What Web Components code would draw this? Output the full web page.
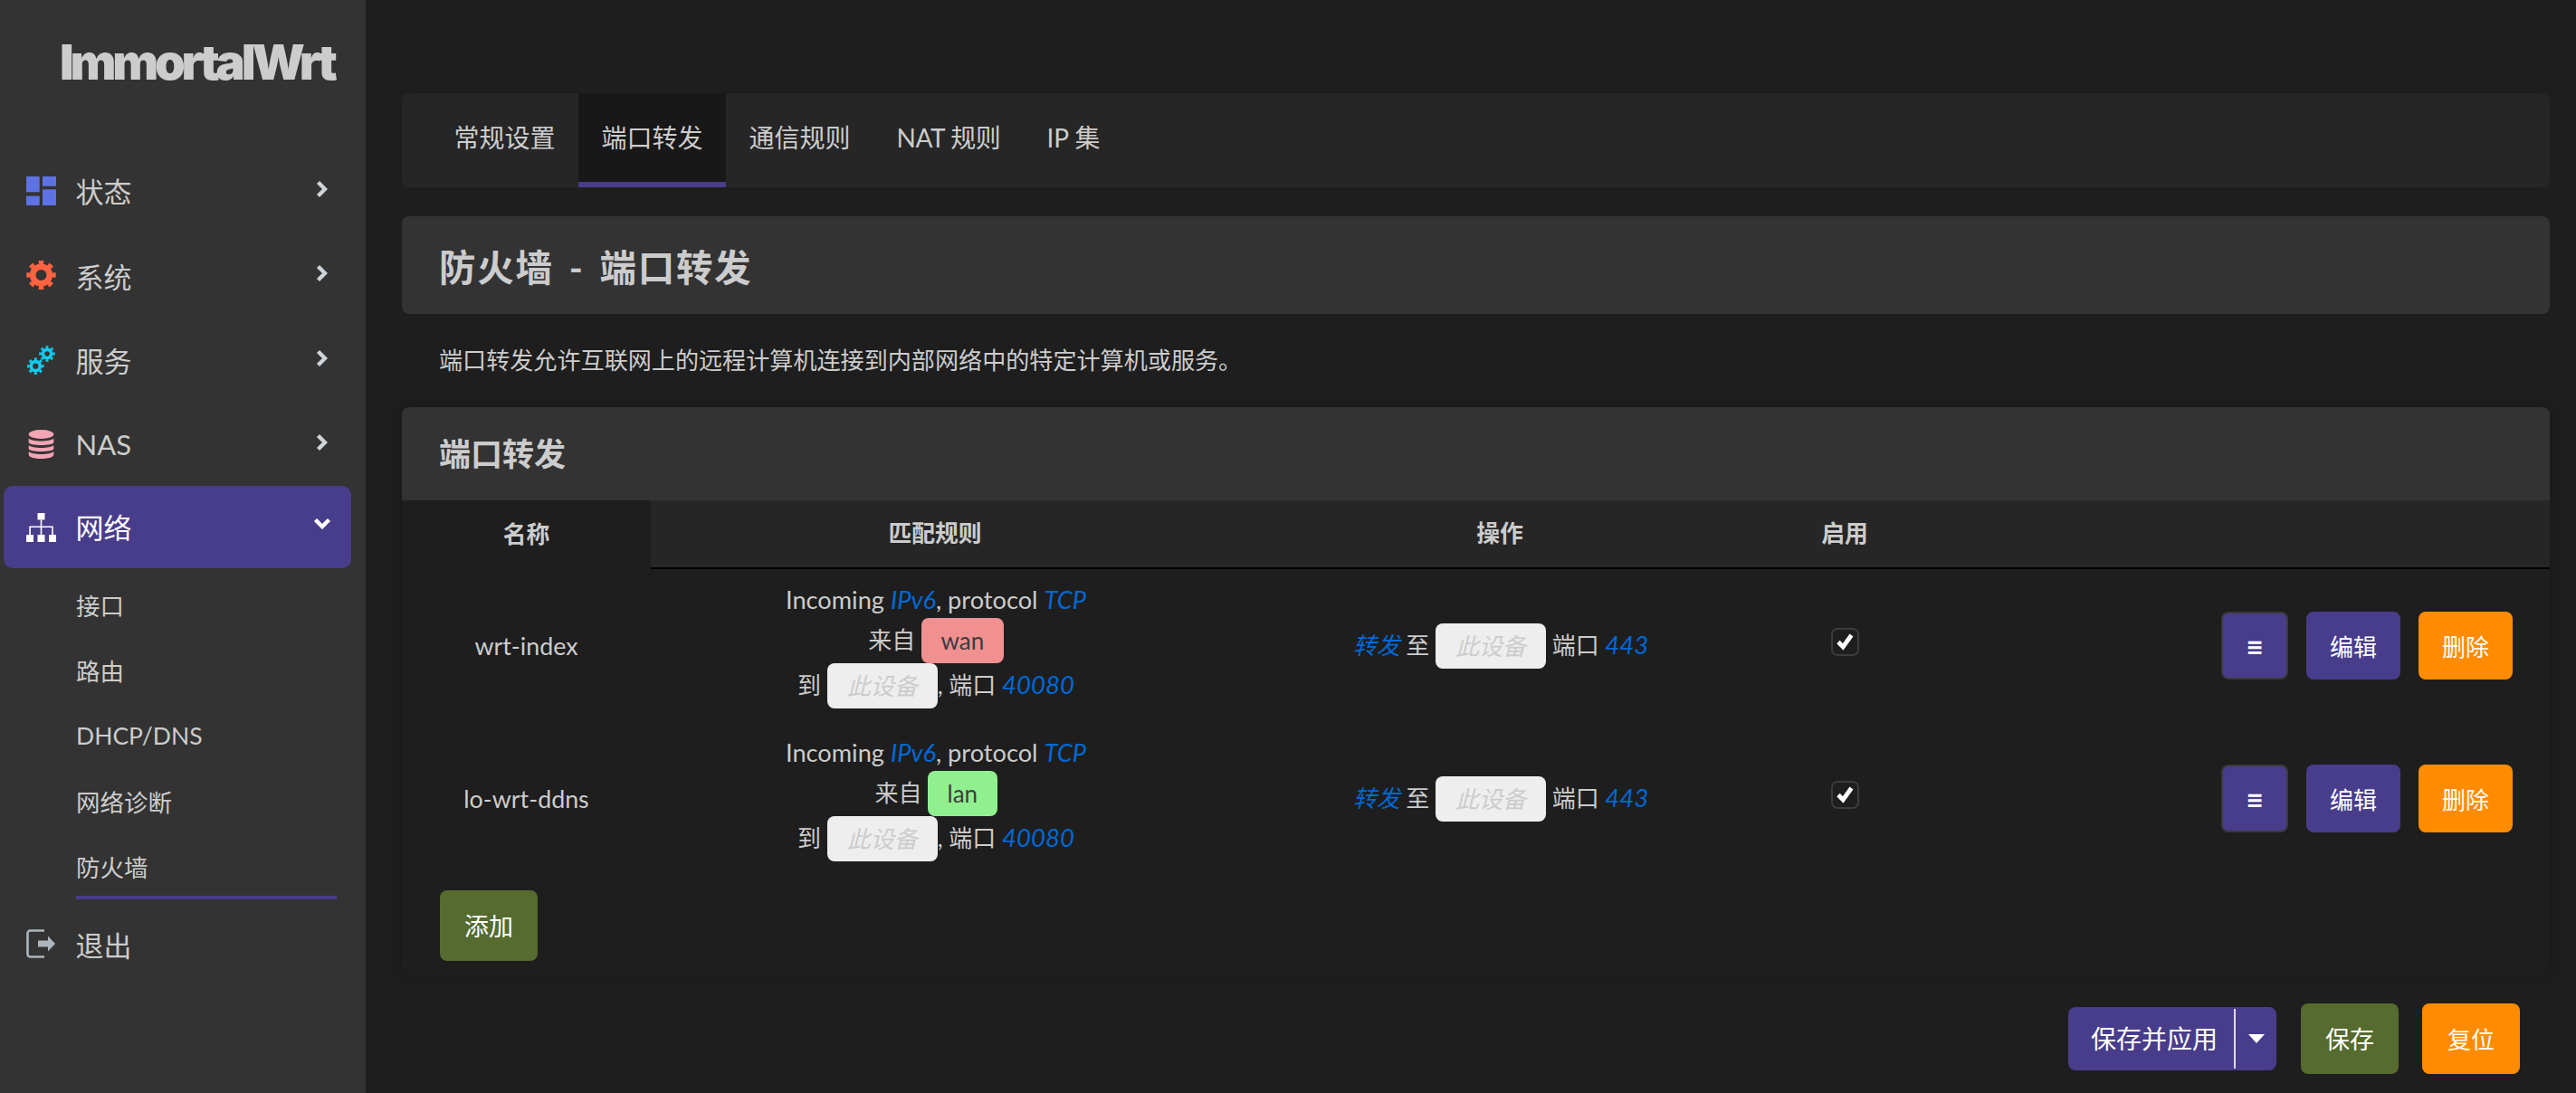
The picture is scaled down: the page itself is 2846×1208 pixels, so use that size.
<!DOCTYPE html>
<html lang="zh-CN">
<head>
<meta charset="utf-8">
<title>防火墙 - 端口转发</title>
<style>
    html, body {
        margin: 0;
        height: 100%;
        background: #1e1e1e;
        overflow: hidden;
    }
    body {
        color: #ccc;
        font-family: Lato, 'Noto Sans CJK SC', sans-serif;
        font-size: 26px;
    }
</style>
</head>
<body>

<op-app>
    <op-sidebar slot="side">
        <op-nav-item>
            <svg slot="icon" width="33" height="32" viewBox="0 0 33 32" fill="#5e72e4"><rect width="14.7" height="17.3"/><rect y="21.6" width="14.7" height="10.4"/><rect x="18" width="15" height="10.7"/><rect x="18" y="14.3" width="15" height="17.7"/></svg>
            状态
        </op-nav-item>
        <op-nav-item>
            <svg slot="icon" width="33" height="32" viewBox="0 0 33 32" fill="none" stroke="#fb6340"><circle cx="16.5" cy="16" r="9.3" stroke-width="6.6"/><circle cx="16.5" cy="16" r="14" stroke-width="4.4" pathLength="80" stroke-dasharray="5 5" stroke-dashoffset="2.5"/></svg>
            系统
        </op-nav-item>
        <op-nav-item>
            <svg slot="icon" width="33" height="32" viewBox="0 0 33 32" fill="none" stroke="#11cdef"><circle cx="10.3" cy="22.7" r="5" stroke-width="3.8"/><circle cx="10.3" cy="22.7" r="8" stroke-width="2.6" pathLength="80" stroke-dasharray="5 5" stroke-dashoffset="2.5"/><circle cx="23" cy="9" r="4.6" stroke-width="3.6"/><circle cx="23" cy="9" r="7.5" stroke-width="2.6" pathLength="80" stroke-dasharray="5 5" stroke-dashoffset="2.5"/></svg>
            服务
        </op-nav-item>
        <op-nav-item style="margin-bottom: .5px">
            <svg slot="icon" width="33" height="32" viewBox="0 0 33 32" fill="#f3a4b5"><ellipse cx="16.5" cy="5" rx="13.8" ry="5"/><path d="M2.7 9.5C6 13.4 27 13.4 30.3 9.5V14C30.3 18 2.7 18 2.7 14Z"/><path d="M2.7 17C6 20.9 27 20.9 30.3 17V21C30.3 25 2.7 25 2.7 21Z"/><path d="M2.7 24C6 27.9 27 27.9 30.3 24V27.5C30.3 33.5 2.7 33.5 2.7 27.5Z"/></svg>
            NAS
        </op-nav-item>
        <op-nav-item open>
            <svg slot="icon" width="33" height="32" viewBox="0 0 33 32" fill="#fff"><rect x="12.5" width="8" height="7.5"/><rect y="24" width="8" height="8"/><rect x="12.5" y="24" width="8" height="8"/><rect x="25" y="24" width="8" height="8"/><path d="M15.7 7.5h1.6v7h12.5v9.5h-1.6v-8H17.3v8h-1.6v-8H4.9v8H3.3v-9.5h12.4z"/></svg>
            网络
        </op-nav-item>
        <op-sub-item>接口</op-sub-item>
        <op-sub-item>路由</op-sub-item>
        <op-sub-item>DHCP/DNS</op-sub-item>
        <op-sub-item>网络诊断</op-sub-item>
        <op-sub-item active>防火墙</op-sub-item>
        <op-nav-item leaf>
            <svg slot="icon" width="33" height="32" viewBox="0 0 33 32"><path d="M20 1.5H4.5a3 3 0 0 0-3 3v23a3 3 0 0 0 3 3H20" fill="none" stroke="#adb5bd" stroke-width="2.6"/><path d="M13 12.5h11V7.5l8 8.5-8 8.500v-5H13z" fill="#adb5bd"/></svg>
            退出
        </op-nav-item>
    </op-sidebar>

    <op-tabs>
        <op-tab>常规设置</op-tab>
        <op-tab active>端口转发</op-tab>
        <op-tab>通信规则</op-tab>
        <op-tab style="letter-spacing: -.4px">NAT 规则</op-tab>
        <op-tab>IP 集</op-tab>
    </op-tabs>

    <op-title>防火墙 - 端口转发</op-title>
    <op-desc>端口转发允许互联网上的远程计算机连接到内部网络中的特定计算机或服务。</op-desc>

    <op-section heading="端口转发">
        <op-table-head></op-table-head>
        <op-rule-row name="wrt-index" zone="wan"></op-rule-row>
        <op-rule-row name="lo-wrt-ddns" zone="lan"></op-rule-row>
        <op-btn slot="add" kind="green" w="108" h="78">添加</op-btn>
    </op-section>

    <op-footer>
        <op-apply>保存并应用</op-apply>
        <op-btn kind="green" w="108" h="78">保存</op-btn>
        <op-btn kind="orange" w="108" h="78">复位</op-btn>
    </op-footer>
</op-app>

<script>
// every element keeps its own markup and styles in an open shadow root
function shadow(el, html) {
    el.attachShadow({mode: 'open'}).innerHTML = html;
}

class OpApp extends HTMLElement {
    constructor() {
        super();
        shadow(this, `
            <style>
                :host { display: flex; height: 1208px; }
                main { flex: 1; min-width: 0; padding: 103px 29px 0 40px; }
            </style>
            <slot name="side"></slot>
            <main><slot></slot></main>
        `);
    }
}

class OpSidebar extends HTMLElement {
    constructor() {
        super();
        shadow(this, `
            <style>
                :host {
                    display: block;
                    flex: none;
                    width: 404px;
                    height: 100%;
                    background: #333;
                    box-sizing: border-box;
                    padding: 0 16px 0 4px;
                }
                .logo {
                    height: 165px;
                    padding: 33px 0 0 62px;
                    box-sizing: border-box;
                    font: 900 54px/72px Inter, sans-serif;
                    letter-spacing: -4.200px;
                    color: #ccc;
                }
            </style>
            <div class="logo">ImmortalWrt</div>
            <slot></slot>
        `);
    }
}

class OpNavItem extends HTMLElement {
    constructor() {
        super();
        const open = this.hasAttribute('open');
        const leaf = this.hasAttribute('leaf');
        let arrow = '<svg class="arrow" width="13" height="20" viewBox="0 0 13 20"><path d="M2.500 2.500 10 10l-7.500 7.500" fill="none" stroke="#ced4da" stroke-width="4.400"/></svg>';
        if (open) {
            arrow = '<svg class="arrow down" width="20" height="13" viewBox="0 0 20 13"><path d="M2.500 2.500 10 10l7.500-7.500" fill="none" stroke="#fff" stroke-width="4.400"/></svg>';
        }
        shadow(this, `
            <style>
                :host {
                    display: flex;
                    align-items: center;
                    height: 91px;
                    margin-bottom: 2.500px;
                    padding-left: 25px;
                    border-radius: 10px;
                    font-size: 31px;
                    color: #ccc;
                }
                :host([open]) { background: #483d8b; color: #fff; margin-bottom: 0; }
                :host([open]) span { top: -1px; }
                :host([leaf]) { margin-top: 4px; }
                ::slotted(svg) { flex: none; margin-right: 21.500px; }
                span { position: relative; }
                .arrow { margin-left: auto; margin-right: 26px; position: relative; top: -2px; }
                .arrow.down { margin-right: 22px; top: -4px; }
            </style>
            <slot name="icon"></slot>
            <span><slot></slot></span>
            ${leaf ? '' : arrow}
        `);
    }
}

class OpSubItem extends HTMLElement {
    constructor() {
        super();
        shadow(this, `
            <style>
                :host {
                    display: flex;
                    align-items: center;
                    height: 72.400px;
                    margin-left: 80px;
                    margin-right: 16px;
                    box-sizing: border-box;
                    font-size: 26.500px;
                    color: #ccc;
                }
                :host(:first-of-type) { margin-top: 4px; }
                :host([active]) { border-bottom: 4px solid #483d8b; padding-top: 4px; }
            </style>
            <slot></slot>
        `);
    }
}

class OpTabs extends HTMLElement {
    constructor() {
        super();
        shadow(this, `
            <style>
                :host {
                    display: flex;
                    height: 104px;
                    padding-left: 32px;
                    background: #262626;
                    border-radius: 8px;
                    overflow: hidden;
                }
            </style>
            <slot></slot>
        `);
    }
}

class OpTab extends HTMLElement {
    constructor() {
        super();
        shadow(this, `
            <style>
                :host {
                    display: block;
                    padding: 25px 25.500px 0;
                    box-sizing: border-box;
                    height: 104px;
                    font-size: 28px;
                    line-height: 48px;
                    color: #ccc;
                }
                :host([active]) { background: #181818; border-bottom: 6px solid #483d8b; }
            </style>
            <slot></slot>
        `);
    }
}

class OpTitle extends HTMLElement {
    constructor() {
        super();
        shadow(this, `
            <style>
                :host {
                    display: flex;
                    align-items: center;
                    height: 108px;
                    margin-top: 32px;
                    padding-left: 41px;
                    background: #333;
                    border-radius: 8px;
                    font-size: 40.500px;
                    font-weight: 700;
                    letter-spacing: 1.700px;
                    word-spacing: 5.500px;
                    color: #ccc;
                }
            </style>
            <slot></slot>
        `);
    }
}

class OpDesc extends HTMLElement {
    constructor() {
        super();
        shadow(this, `
            <style>
                :host {
                    display: flex;
                    align-items: center;
                    height: 100px;
                    margin-bottom: 3px;
                    padding-left: 41px;
                    font-size: 26.100px;
                    color: #ccc;
                }
            </style>
            <slot></slot>
        `);
    }
}

class OpSection extends HTMLElement {
    constructor() {
        super();
        shadow(this, `
            <style>
                :host {
                    display: block;
                    background: #1e1e1e;
                    border-radius: 8px;
                    box-shadow: 0 0 12px rgba(0, 0, 0, .18);
                }
                h3 {
                    margin: 0;
                    height: 103px;
                    padding: 0 0 5px 41px;
                    box-sizing: border-box;
                    display: flex;
                    align-items: center;
                    background: #333;
                    border-radius: 8px 8px 0 0;
                    font-size: 35px;
                    font-weight: 700;
                    color: #ccc;
                }
                .add { padding: 16.500px 0 16px 42px; display: flex; }
            </style>
            <h3>${this.getAttribute('heading')}</h3>
            <slot></slot>
            <div class="add"><slot name="add"></slot></div>
        `);
    }
}

const columns = 'grid-template-columns: 275px 628px 620px 142px 1fr;';

class OpTableHead extends HTMLElement {
    constructor() {
        super();
        shadow(this, `
            <style>
                :host {
                    display: grid;
                    ${columns}
                    height: 76px;
                    font-size: 25.800px;
                    font-weight: 700;
                    color: #ccc;
                    text-align: center;
                }
                div {
                    line-height: 72px;
                    background: #262626;
                    border-bottom: 2px solid #000;
                }
                div:first-of-type { background: #1e1e1e; border-bottom: 0; line-height: 74px; }
            </style>
            <div>名称</div><div>匹配规则</div><div>操作</div><div>启用</div><div></div>
        `);
    }
}

class OpRuleRow extends HTMLElement {
    constructor() {
        super();
        const zone = this.getAttribute('zone');
        shadow(this, `
            <style>
                :host {
                    display: grid;
                    ${columns}
                    height: 169px;
                    align-items: center;
                    text-align: center;
                    font-size: 26px;
                    color: #ccc;
                }
                .line { height: 50px; line-height: 48px; white-space: nowrap; }
                .line.first { height: 38px; line-height: 36px; font-size: 27.200px; }
                .line.op { padding-left: 2px; }
                .name { font-size: 26.800px; }
                i { color: #0069d6; }
                i.num { font-size: 27.600px; }
                .rule { padding-left: 2px; }
                .acts {
                    display: flex;
                    justify-content: flex-end;
                    align-items: center;
                    padding-right: 41px;
                    gap: 20px;
                }
                op-check { justify-self: center; position: relative; top: -4px; }
            </style>
            <div class="name">${this.getAttribute('name')}</div>
            <div class="rule">
                <div class="line first">Incoming <i>IPv6</i>, protocol <i>TCP</i></div>
                <div class="line">来自 <op-badge zone="${zone}">${zone}</op-badge></div>
                <div class="line">到 <op-badge device>此设备</op-badge>, 端口 <i class="num">40080</i></div>
            </div>
            <div class="line op"><i>转发</i> 至 <op-badge device>此设备</op-badge> 端口 <i class="num">443</i></div>
            <op-check></op-check>
            <div class="acts">
                <op-btn kind="drag" w="74" h="75">≡</op-btn>
                <op-btn kind="purple" w="104" h="75">编辑</op-btn>
                <op-btn kind="orange" w="104" h="75">删除</op-btn>
            </div>
        `);
    }
}

class OpBadge extends HTMLElement {
    constructor() {
        super();
        shadow(this, `
            <style>
                :host {
                    display: inline-block;
                    height: 50px;
                    line-height: 50px;
                    padding: 0 21.500px;
                    vertical-align: top;
                    border-radius: 8px;
                    color: #3c3c3c;
                }
                :host([zone="wan"]) { background: #f09090; }
                :host([zone="lan"]) { background: #90f090; }
                :host([device]) {
                    background: #eee;
                    color: #ccc;
                    font-style: italic;
                    padding: 0 22px;
                }
            </style>
            <slot></slot>
        `);
    }
}

class OpCheck extends HTMLElement {
    constructor() {
        super();
        shadow(this, `
            <style>
                :host {
                    display: block;
                    width: 31px;
                    height: 31px;
                    box-sizing: border-box;
                    border: 2px solid #3c3c3c;
                    border-radius: 7px;
                    background: #1e1e1e;
                }
                svg { display: block; }
            </style>
            <svg width="27" height="27" viewBox="0 0 27 27"><path d="M6 13.500l5.200 5.500 9.300-13" fill="none" stroke="#fff" stroke-width="4.800"/></svg>
        `);
    }
}

class OpBtn extends HTMLElement {
    constructor() {
        super();
        shadow(this, `
            <style>
                :host {
                    display: flex;
                    flex: none;
                    align-items: center;
                    justify-content: center;
                    box-sizing: border-box;
                    width: ${this.getAttribute('w')}px;
                    height: ${this.getAttribute('h')}px;
                    border-radius: 8px;
                    font-size: 26px;
                    color: #fff;
                }
                :host([kind="green"]) { background: #556b2f; font-size: 27px; }
                :host([kind="orange"]) { background: #ff8c00; }
                :host([kind="purple"]) { background: #483d8b; }
                :host([kind="drag"]) { background: #483d8b; border: 2px solid #3a3a3a; font-size: 33px; font-weight: 700; }
            </style>
            <slot></slot>
        `);
    }
}

class OpApply extends HTMLElement {
    constructor() {
        super();
        shadow(this, `
            <style>
                :host {
                    display: flex;
                    flex: none;
                    box-sizing: border-box;
                    width: 230px;
                    height: 70px;
                    background: #483d8b;
                    border-radius: 8px;
                    font-size: 28px;
                    color: #fff;
                }
                .text {
                    width: 183px;
                    box-sizing: border-box;
                    padding-left: 25px;
                    line-height: 70px;
                    white-space: nowrap;
                }
                .more {
                    flex: 1;
                    margin: 2px 0;
                    border-left: 2px solid #ddd;
                    display: flex;
                    align-items: center;
                    justify-content: center;
                }
                .more b {
                    width: 0;
                    height: 0;
                    border-left: 9px solid transparent;
                    border-right: 9px solid transparent;
                    border-top: 10px solid #fff;
                }
            </style>
            <div class="text"><slot></slot></div>
            <div class="more"><b></b></div>
        `);
    }
}

class OpFooter extends HTMLElement {
    constructor() {
        super();
        shadow(this, `
            <style>
                :host {
                    display: flex;
                    justify-content: flex-end;
                    align-items: center;
                    gap: 26px;
                    margin-top: 31px;
                    padding-right: 33px;
                }
                ::slotted(op-apply) { margin-right: 1px; }
            </style>
            <slot></slot>
        `);
    }
}

customElements.define('op-app', OpApp);
customElements.define('op-sidebar', OpSidebar);
customElements.define('op-nav-item', OpNavItem);
customElements.define('op-sub-item', OpSubItem);
customElements.define('op-tabs', OpTabs);
customElements.define('op-tab', OpTab);
customElements.define('op-title', OpTitle);
customElements.define('op-desc', OpDesc);
customElements.define('op-section', OpSection);
customElements.define('op-table-head', OpTableHead);
customElements.define('op-rule-row', OpRuleRow);
customElements.define('op-badge', OpBadge);
customElements.define('op-check', OpCheck);
customElements.define('op-btn', OpBtn);
customElements.define('op-apply', OpApply);
customElements.define('op-footer', OpFooter);
</script>
</body>
</html>
